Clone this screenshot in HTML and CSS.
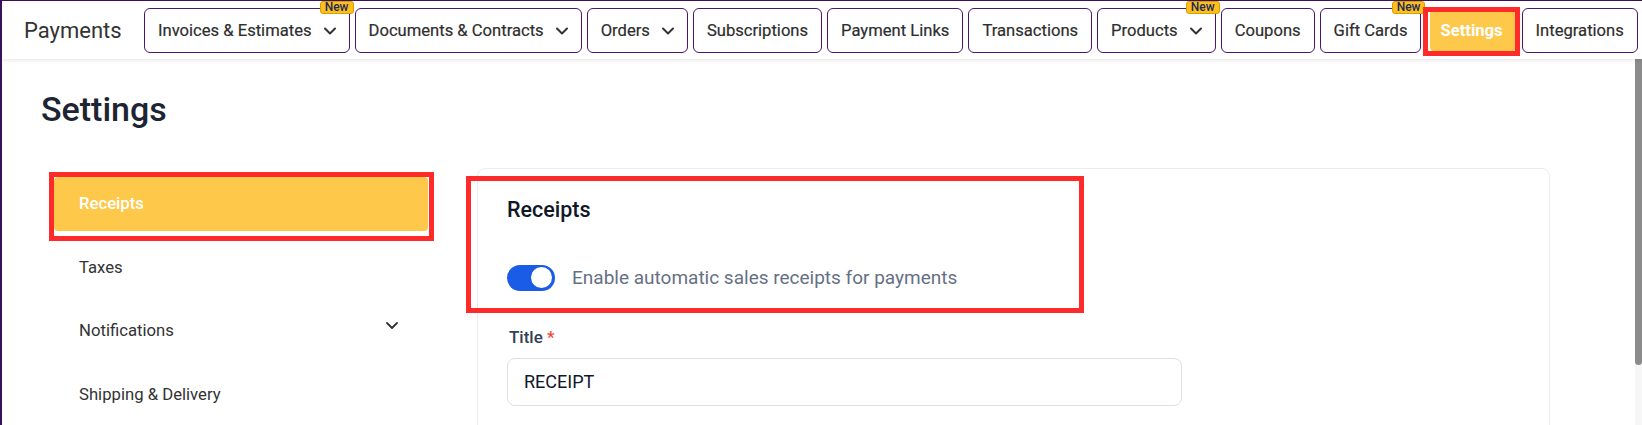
FILE: index.html
```html
<!DOCTYPE html>
<html lang="en">
<head>
<meta charset="utf-8">
<title>Payments - Settings</title>
<link rel="stylesheet" href="styles.css">
</head>
<body>
<div class="app">
  <header class="topbar">
    <div class="brand">Payments</div>
    <nav class="tabs">
      <div class="tab">Invoices &amp; Estimates <svg class="chev" viewBox="0 0 12 8" width="12" height="8"><path d="M1 1.5l5 5 5-5"/></svg><span class="badge">New</span></div>
      <div class="tab">Documents &amp; Contracts <svg class="chev" viewBox="0 0 12 8" width="12" height="8"><path d="M1 1.5l5 5 5-5"/></svg></div>
      <div class="tab">Orders <svg class="chev" viewBox="0 0 12 8" width="12" height="8"><path d="M1 1.5l5 5 5-5"/></svg></div>
      <div class="tab">Subscriptions</div>
      <div class="tab">Payment Links</div>
      <div class="tab">Transactions</div>
      <div class="tab">Products <svg class="chev" viewBox="0 0 12 8" width="12" height="8"><path d="M1 1.5l5 5 5-5"/></svg><span class="badge">New</span></div>
      <div class="tab">Coupons</div>
      <div class="tab">Gift Cards<span class="badge">New</span></div>
      <div class="tab active">Settings</div>
      <div class="tab">Integrations</div>
    </nav>
  </header>
  <div class="below">
    <main class="page">
      <h1 class="page-title">Settings</h1>
      <div class="layout">
        <aside class="sidenav">
          <div class="nav-item active">Receipts</div>
          <div class="nav-item">Taxes</div>
          <div class="nav-item">Notifications <svg class="nav-chev" viewBox="0 0 12 8" width="12" height="8"><path d="M1 1l5 5 5-5"/></svg></div>
          <div class="nav-item">Shipping &amp; Delivery</div>
        </aside>
        <section class="card">
          <div class="receipts-head">
            <h2 class="card-title">Receipts</h2>
            <div class="toggle-row">
              <span class="toggle"><span class="knob"></span></span>
              <span class="toggle-label">Enable automatic sales receipts for payments</span>
            </div>
          </div>
          <div class="field">
            <label class="field-label">Title <span class="req">*</span></label>
            <div class="input">RECEIPT</div>
          </div>
        </section>
      </div>
    </main>
    <div class="scroll"><div class="thumb"></div></div>
  </div>
</div>
</body>
</html>
```
FILE: styles.css
```css
html, body {
  margin: 0;
  padding: 0;
  height: 100%;
  overflow: hidden;
  background: #ffffff;
}
body {
  font-family: "Roboto", "Inter", sans-serif;
  color: #333333;
}
.app {
  box-sizing: border-box;
  height: 100vh;
  display: flex;
  flex-direction: column;
  border-left: 2px solid #3a0f5c;
  border-top: 1px solid #3a0f5c;
  overflow: hidden;
}
.topbar {
  position: relative;
  z-index: 2;
  box-sizing: border-box;
  height: 58px;
  flex: none;
  display: flex;
  align-items: flex-start;
  padding: 7px 0 0 22px;
  background: #ffffff;
  box-shadow: 0 2px 4px rgba(0, 0, 0, 0.08);
}
.brand {
  width: 120px;
  flex: none;
  font-size: 22px;
  line-height: 45px;
  color: #333333;
}
.tabs {
  display: flex;
  gap: 5px;
}
.tab {
  position: relative;
  box-sizing: border-box;
  height: 45px;
  display: flex;
  align-items: center;
  gap: 12px;
  padding: 0 13px;
  border: 1px solid #4a1570;
  border-radius: 6px;
  font-size: 16.6px;
  font-weight: 400;
  color: #2e2e2e;
  white-space: nowrap;
  background: #ffffff;
  -webkit-text-stroke: 0.2px #2e2e2e;
}
.chev {
  fill: none;
  stroke: #333333;
  stroke-width: 2;
  stroke-linecap: round;
  stroke-linejoin: round;
}
.badge {
  position: absolute;
  top: -8px;
  right: -5px;
  box-sizing: border-box;
  height: 13px;
  padding: 0 4px;
  border: 1px solid #d99e00;
  border-radius: 3px;
  background: #fcbf1e;
  color: #1c2a55;
  font-size: 12px;
  font-weight: 500;
  line-height: 11px;
  -webkit-text-stroke: 0;
}
.tab.active {
  border-color: #ffffff;
  background: #fec84b;
  color: #ffffff;
  font-weight: 700;
  -webkit-text-stroke: 0;
  box-shadow: inset 3px 0 0 0 #ffffff;
}
.tab.active::after {
  content: "";
  position: absolute;
  top: -2px;
  bottom: -4px;
  left: -4px;
  right: -4px;
  border: 5px solid #ff2a2a;
}
.below {
  flex: 1;
  min-height: 0;
  display: flex;
}
.page {
  flex: 1;
  min-width: 0;
  overflow: hidden;
  padding: 30px 85px 0 39px;
}
.page-title {
  margin: 0;
  font-size: 34px;
  line-height: 40px;
  font-weight: 500;
  color: #1d2433;
}
.layout {
  display: flex;
  gap: 49px;
  margin-top: 38.6px;
  align-items: flex-start;
}
.sidenav {
  width: 374px;
  flex: none;
  margin-left: 13px;
  padding-top: 9px;
  display: flex;
  flex-direction: column;
  gap: 9.5px;
}
.nav-item {
  position: relative;
  box-sizing: border-box;
  height: 54px;
  display: flex;
  align-items: center;
  justify-content: space-between;
  padding: 0 30px 0 25px;
  border-radius: 4px;
  font-size: 16.7px;
  color: #333333;
}
.nav-item.active {
  background: #fec84b;
  color: #ffffff;
  font-weight: 500;
}
.nav-item.active::after {
  content: "";
  position: absolute;
  top: -5px;
  bottom: -10px;
  left: -5px;
  right: -6px;
  border: 5px solid #ff2a2a;
}
.nav-chev {
  fill: none;
  stroke: #333333;
  stroke-width: 1.8;
  stroke-linecap: round;
  stroke-linejoin: round;
  margin-top: -9px;
}
.card {
  flex: 1;
  min-width: 0;
  box-sizing: border-box;
  min-height: 420px;
  border: 1px solid #eaecf0;
  border-radius: 8px;
  padding: 27px 29px 0 29px;
  background: #ffffff;
}
.receipts-head {
  position: relative;
}
.receipts-head::after {
  content: "";
  position: absolute;
  top: -20px;
  left: -41px;
  width: 618px;
  height: 137px;
  box-sizing: border-box;
  border: 5px solid #ff2a2a;
}
.card-title {
  margin: 0;
  font-size: 21.5px;
  line-height: 28px;
  font-weight: 500;
  color: #101828;
}
.toggle-row {
  margin-top: 41px;
  display: flex;
  align-items: center;
  gap: 17px;
}
.toggle {
  box-sizing: border-box;
  width: 48px;
  height: 26px;
  border-radius: 13px;
  background: #1a5ce6;
  display: flex;
  align-items: center;
  justify-content: flex-end;
  padding-right: 3px;
  flex: none;
}
.knob {
  width: 21px;
  height: 21px;
  border-radius: 50%;
  background: #ffffff;
}
.toggle-label {
  font-size: 19px;
  color: #667085;
}
.field {
  margin-top: 34px;
  display: flex;
  flex-direction: column;
  gap: 9px;
}
.field-label {
  padding-left: 2px;
  font-size: 17px;
  line-height: 24px;
  font-weight: 500;
  color: #344054;
}
.req {
  color: #f04438;
}
.input {
  box-sizing: border-box;
  width: 675px;
  height: 48px;
  display: flex;
  align-items: center;
  padding-left: 16px;
  border: 1px solid #dcdfe5;
  border-radius: 8px;
  font-size: 18px;
  color: #101828;
}
.scroll {
  width: 7px;
  flex: none;
  background: #f7f7f7;
}
.thumb {
  height: 306px;
  background: #8b8b8b;
  border-radius: 0 0 4px 4px;
}
```
